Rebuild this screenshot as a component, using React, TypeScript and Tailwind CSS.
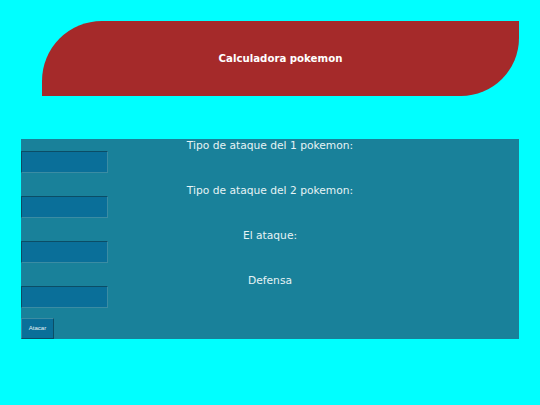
export default function App() {
  const labels = [
    "Tipo de ataque del 1 pokemon:",
    "Tipo de ataque del 2 pokemon:",
    "El ataque:",
    "Defensa",
  ];

  return (
    <div
      className="min-h-[405px] w-full bg-[#00ffff] pt-[21px]"
      style={{ fontFamily: '"DejaVu Sans", Verdana, sans-serif' }}
    >
      <header className="ml-[42px] mr-[21px] flex h-[75px] items-center justify-center rounded-tl-[60px] rounded-br-[58px] bg-[#a52a2a] pt-[2px]">
        <h1 className="text-[10.2px] font-bold leading-none text-white">Calculadora pokemon</h1>
      </header>

      <form
        className="mx-[21px] mt-[43px] flex flex-col bg-[#19819a]"
        onSubmit={(e) => e.preventDefault()}
      >
        {labels.map((label, i) => (
          <div key={label} className={i === labels.length - 1 ? "mb-[10px]" : "mb-[11px]"}>
            <p className="h-[12px] text-center text-[10.7px] leading-[14px] text-[#e6f3f5]">{label}</p>
            <input
              type="text"
              className="block h-[22px] w-[87px] border border-t-[#0b4d66] border-l-[#0b4d66] border-b-[#3b8ca3] border-r-[#3b8ca3] bg-[#0a6f99] outline-none"
            />
          </div>
        ))}
        <button
          type="submit"
          className="h-[21px] w-[33px] border border-t-[#3b8ca3] border-l-[#3b8ca3] border-b-[#0b4d66] border-r-[#0b4d66] bg-[#0a6f99] text-[6px] text-[#e6f3f5]"
          style={{ fontFamily: '"Liberation Sans", Arial, sans-serif' }}
        >
          Atacar
        </button>
      </form>
    </div>
  );
}
